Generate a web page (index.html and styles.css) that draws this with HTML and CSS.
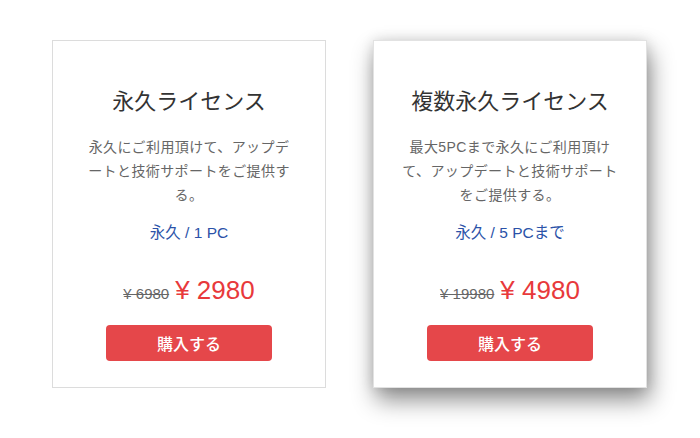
FILE: index.html
```html
<!DOCTYPE html>
<html lang="ja">
<head>
    <meta charset="UTF-8">
    <meta name="viewport" content="width=device-width, initial-scale=1.0">
    <title>ライセンス</title>
    <link rel="stylesheet" href="styles.css">
</head>
<body>
    <div class="plans">
        <div class="plan">
            <h2 class="plan-title">永久ライセンス</h2>
            <p class="plan-desc">永久にご利用頂けて、アップデ<br>ートと技術サポートをご提供す<br>る。</p>
            <div class="plan-term">永久 / 1 PC</div>
            <div class="plan-price">
                <span class="old">¥ 6980</span>
                <span class="now">¥ 2980</span>
            </div>
            <button class="buy">購入する</button>
        </div>

        <div class="plan featured">
            <h2 class="plan-title">複数永久ライセンス</h2>
            <p class="plan-desc">最大5PCまで永久にご利用頂け<br>て、アップデートと技術サポート<br>をご提供する。</p>
            <div class="plan-term">永久 / 5 PCまで</div>
            <div class="plan-price">
                <span class="old">¥ 19980</span>
                <span class="now">¥ 4980</span>
            </div>
            <button class="buy">購入する</button>
        </div>
    </div>
</body>
</html>
```

FILE: styles.css
```css
html, body {
    height: 100%;
}
body {
    margin: 0;
    background: #fff;
    font-family: "Liberation Sans", "Noto Sans CJK JP", sans-serif;
}
.plans {
    display: flex;
    align-items: flex-start;
    gap: 47px;
    padding: 40px 0 50px 52px;
}
.plan {
    width: 274px;
    height: 348px;
    box-sizing: border-box;
    border: 1px solid #dcdcdc;
    background: #fff;
    padding: 46px 20px 0;
    display: flex;
    flex-direction: column;
    align-items: center;
    text-align: center;
}
.featured {
    border-color: #e2e2e2;
    box-shadow: 3px 12px 22px rgba(0,0,0,0.45), 0 0 12px rgba(0,0,0,0.12);
}
.plan-title {
    margin: 0;
    font-size: 22px;
    line-height: 30px;
    font-weight: normal;
    color: #333;
}
.plan-desc {
    margin: 18px 0 0;
    font-size: 14px;
    letter-spacing: 0.4px;
    line-height: 24px;
    color: #666;
    white-space: nowrap;
}
.plan-term {
    margin-top: 14px;
    font-size: 15.5px;
    line-height: 24px;
    color: #2b52a8;
}
.plan-price {
    margin-top: 27px;
    line-height: 36px;
    display: flex;
    align-items: baseline;
    gap: 6px;
}
.old {
    font-size: 15px;
    color: #666;
    text-decoration: line-through;
}
.now {
    font-size: 26px;
    color: #e8393b;
}
.buy {
    margin-top: 13px;
    width: 166px;
    height: 36px;
    border: none;
    border-radius: 4px;
    background-color: #e5474a;
    color: #fff;
    font-family: inherit;
    font-size: 16px;
    font-weight: 500;
    cursor: pointer;
}
.buy:hover {
    background-color: #d63a3d;
}
```
